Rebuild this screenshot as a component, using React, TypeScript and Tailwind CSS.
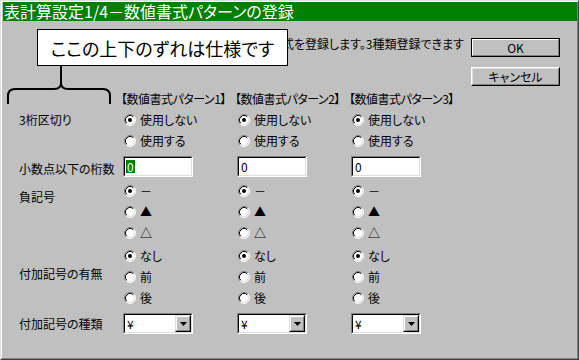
import React from "react";

const FONT = "font-['Noto_Sans_CJK_JP',sans-serif] [font-feature-settings:'palt']";

function Radio({ checked }: { checked?: boolean }) {
  return (
    <svg width="12" height="12" viewBox="0 0 12 12" className="shrink-0">
      <circle cx="6" cy="6" r="5" fill="#fff" />
      <path d="M2.11 9.89 A5.5 5.5 0 0 1 9.89 2.11" stroke="#808080" fill="none" />
      <path d="M9.89 2.11 A5.5 5.5 0 0 1 2.11 9.89" stroke="#ffffff" fill="none" />
      <path d="M2.82 9.18 A4.5 4.5 0 0 1 9.18 2.82" stroke="#000" fill="none" />
      <path d="M9.18 2.82 A4.5 4.5 0 0 1 2.82 9.18" stroke="#dfdfdf" fill="none" />
      {checked && <circle cx="6" cy="6" r="2" fill="#000" />}
    </svg>
  );
}

function RadioItem({ label, checked }: { label: React.ReactNode; checked?: boolean }) {
  return (
    <div className="flex items-center h-[21px] pl-[1px]">
      <Radio checked={checked} />
      <span className="ml-[4px] leading-[21px]">{label}</span>
    </div>
  );
}

function RadioGroup({ items }: { items: React.ReactNode[] }) {
  return (
    <div className="flex flex-col">
      {items.map((it, i) => (
        <RadioItem key={i} label={it} checked={i === 0} />
      ))}
    </div>
  );
}

function Sunken({ children, className = "" }: { children: React.ReactNode; className?: string }) {
  return (
    <div className={"w-[70px] h-[21px] border border-t-[#808080] border-l-[#808080] border-r-white border-b-white " + className}>
      <div className="h-full border border-t-black border-l-black border-r-[#dfdfdf] border-b-[#dfdfdf] bg-white flex items-center">
        {children}
      </div>
    </div>
  );
}

function NumInput({ selected }: { selected?: boolean }) {
  return (
    <Sunken>
      <div className="pl-[1px] flex items-center">
        {selected ? (
          <span className="bg-[#008000] text-white leading-[13px] px-[1px]">0</span>
        ) : (
          <span className="leading-[13px] px-[1px]">0</span>
        )}
      </div>
    </Sunken>
  );
}

function Combo() {
  return (
    <Sunken>
      <span className="flex-1 pl-[2px] leading-[13px]">¥</span>
      <div className="w-[16px] h-full border border-t-[#dfdfdf] border-l-[#dfdfdf] border-r-black border-b-black">
        <div className="h-full border border-t-white border-l-white border-r-[#808080] border-b-[#808080] bg-[#c0c0c0] flex items-center justify-center">
          <svg width="7" height="4" viewBox="0 0 7 4">
            <path d="M0 0 H7 L3.5 4 Z" fill="#000" />
          </svg>
        </div>
      </div>
    </Sunken>
  );
}

export default function App() {
  const cols = [0, 1, 2];
  return (
    <div className={"relative w-[579px] h-[360px] bg-[#c0c0c0] border border-t-[#dfdfdf] border-l-[#dfdfdf] border-r-[#404040] border-b-[#404040] text-[12px] text-black " + FONT}>
      <div className="h-full border border-t-white border-l-white border-r-[#808080] border-b-[#808080] flex flex-col">
        {/* title bar */}
        <div className="ml-[1px] h-[19px] bg-[#008000] text-white text-[16px] leading-[19px] pl-[1px] whitespace-nowrap">
          表計算設定1/4－数値書式パターンの登録
        </div>

        {/* body */}
        <div className="flex flex-col pl-[17px] pr-[17px]">
          <div className="flex mt-[17px]">
            <div className="flex-1 text-right pr-[7px] leading-[12px] whitespace-nowrap">
              数値の書式を登録します。3種類登録できます
            </div>
            <div className="flex flex-col gap-[10px] w-[89px]">
              <button className="h-[19px] border border-black p-0">
                <div className="h-full border border-t-white border-l-white border-r-[#808080] border-b-[#808080] flex items-center justify-center leading-[12px]">
                  OK
                </div>
              </button>
              <button className="h-[19px] border border-t-white border-l-white border-r-black border-b-black p-0">
                <div className="h-full border border-t-[#dfdfdf] border-l-[#dfdfdf] border-r-[#808080] border-b-[#808080] flex items-center justify-center leading-[12px]">
                  キャンセル
                </div>
              </button>
            </div>
          </div>

          <div className="grid grid-cols-[104px_114px_114px_114px] mt-[2px]">
            {/* headers */}
            <div />
            {cols.map((c) => (
              <div key={c} className="leading-[21px] whitespace-nowrap -ml-[2px] tracking-[-0.5px]">
                【数値書式パターン{c + 1}】
              </div>
            ))}

            {/* 3桁区切り */}
            <div className="leading-[21px]">3桁区切り</div>
            {cols.map((c) => (
              <RadioGroup key={c} items={["使用しない", "使用する"]} />
            ))}

            {/* 小数点以下の桁数 */}
            <div className="mt-[5px] pt-[5px] leading-[16px] whitespace-nowrap">小数点以下の桁数</div>
            {cols.map((c) => (
              <div key={c} className="mt-[5px]">
                <NumInput selected={c === 0} />
              </div>
            ))}

            {/* 負記号 */}
            <div className="mt-[3px] pt-[6px] leading-[21px]">負記号</div>
            {cols.map((c) => (
              <div key={c} className="mt-[3px]">
                <RadioGroup items={["－", "▲", "△"]} />
              </div>
            ))}

            {/* 付加記号の有無 */}
            <div className="mt-[2px] pt-[18px] leading-[21px] whitespace-nowrap">付加記号の有無</div>
            {cols.map((c) => (
              <div key={c} className="mt-[2px]">
                <RadioGroup items={["なし", "前", "後"]} />
              </div>
            ))}

            {/* 付加記号の種類 */}
            <div className="mt-[5px] leading-[21px] whitespace-nowrap">付加記号の種類</div>
            {cols.map((c) => (
              <div key={c} className="mt-[5px]">
                <Combo />
              </div>
            ))}
          </div>
        </div>
      </div>

      {/* callout overlay */}
      <div className="absolute left-[36px] top-[28px] w-[251px] h-[37px] bg-white border border-black flex items-center justify-center text-[18px] leading-[18px] whitespace-nowrap">
        ここの上下のずれは仕様です
      </div>
      <svg className="absolute left-[-1px] top-[59px]" width="120" height="50" viewBox="0 60 120 50">
        <path
          d="M61 66 V83 Q61 89 54 89 H15 Q8 89 8 96 V104 M61 83 Q61 89 68 89 H103 Q110 89 110 96 V104"
          stroke="#000"
          strokeWidth="2"
          fill="none"
        />
      </svg>
    </div>
  );
}
